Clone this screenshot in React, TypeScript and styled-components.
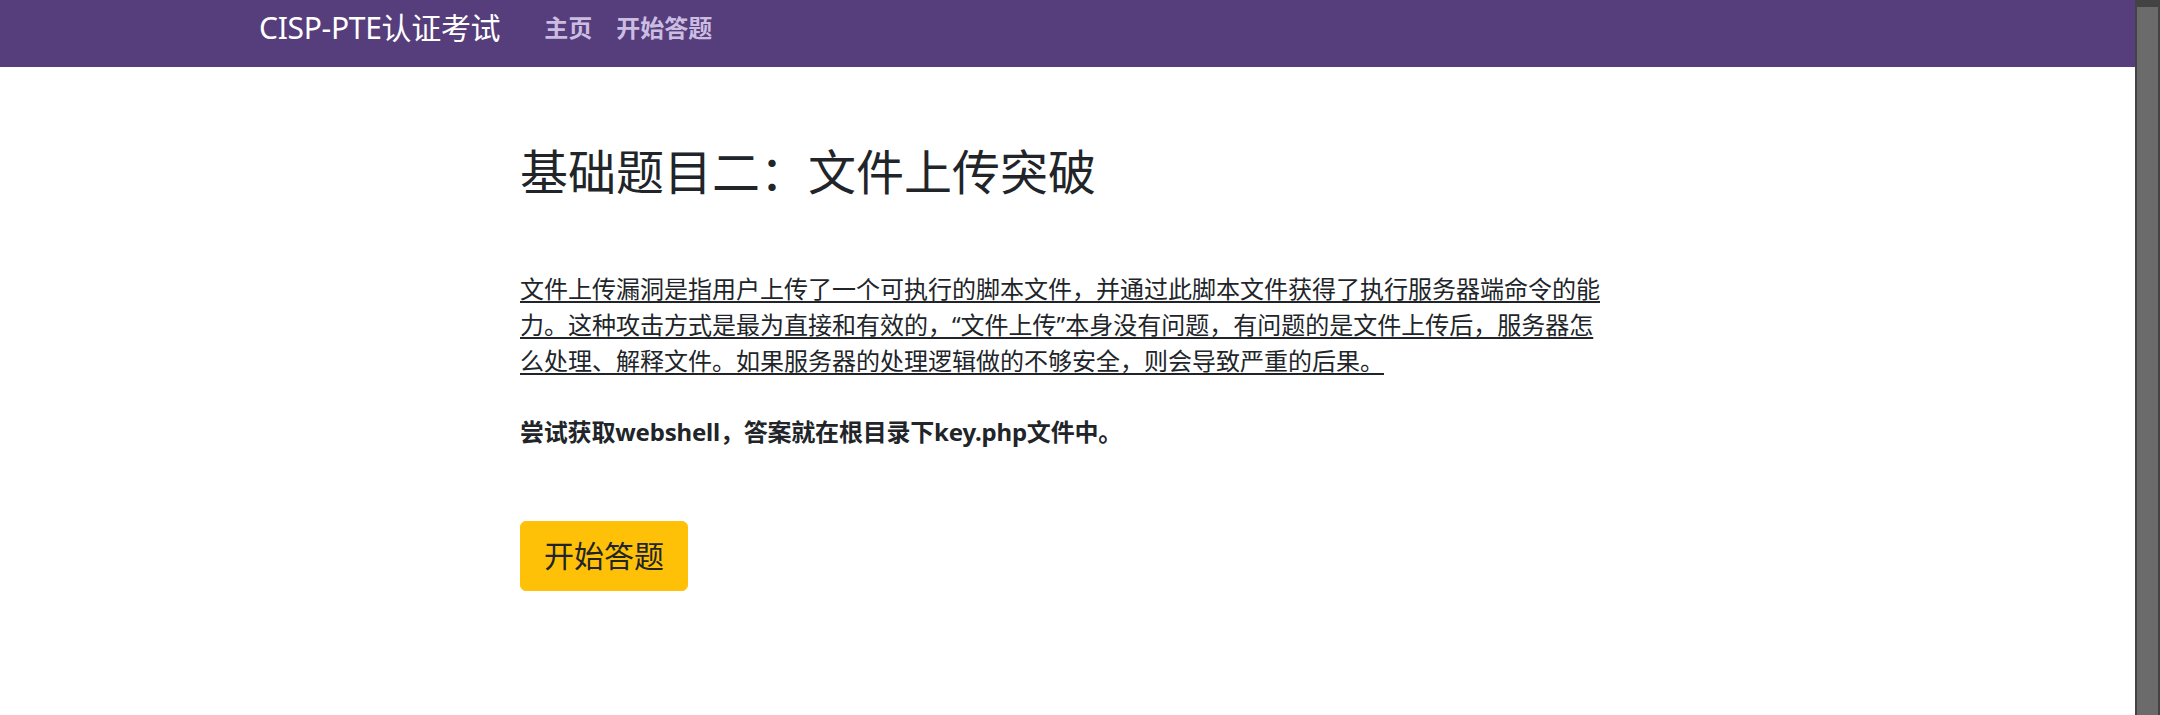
import React from "react";
import styled, { createGlobalStyle } from "styled-components";

const GlobalStyle = createGlobalStyle`
  html, body {
    margin: 0;
    padding: 0;
    background: #ffffff;
    overflow: hidden;
  }
  body {
    font-family: "Noto Sans", "Noto Sans CJK SC", sans-serif;
    color: #212529;
  }
  * { box-sizing: border-box; }
`;

const Frame = styled.div`
  display: flex;
  width: 2160px;
  height: 715px;
  overflow: hidden;
`;

const Page = styled.div`
  flex: 1;
  min-width: 0;
  background: #ffffff;
`;

const ScrollTrack = styled.div`
  width: 25px;
  background: #434343;
  padding: 7px 2px 0 2px;
  display: flex;
`;

const ScrollThumb = styled.div`
  flex: 1;
  background: #6b6b6b;
`;

const NavBar = styled.nav`
  background: #563d7c;
  height: 67px;
`;

const NavInner = styled.div`
  max-width: 1710px;
  margin: 0 auto;
  padding: 5px 22.5px 0 46.5px;
  display: flex;
  align-items: center;
`;

const Brand = styled.a`
  font-size: 30px;
  line-height: 45px;
  color: #ffffff;
  text-decoration: none;
  letter-spacing: -0.3px;
  margin-right: 32px;
`;

const NavLink = styled.a`
  font-size: 24px;
  line-height: 36px;
  font-weight: 700;
  color: #cbbde2;
  text-decoration: none;
  padding: 0 12px;
`;

const Main = styled.main`
  max-width: 1710px;
  margin: 0 auto;
  padding: 76px 22.5px 0;
`;

const Content = styled.div`
  width: 1095px;
  margin-left: 285px;
`;

const Title = styled.h1`
  font-size: 48px;
  font-weight: 400;
  line-height: 1.2;
  margin: 0 0 70px;
  color: #212529;
`;

const Intro = styled.p`
  font-size: 24px;
  line-height: 36px;
  margin: 0 0 35px;
  color: #212529;
  text-decoration: underline;
  text-decoration-thickness: 2px;
  text-underline-offset: 3px;
`;

const Hint = styled.p`
  font-size: 24px;
  line-height: 36px;
  font-weight: 700;
  letter-spacing: -0.2px;
  margin: 0 0 71px;
  color: #212529;
`;

const StartButton = styled.a`
  display: inline-block;
  background: #ffc107;
  border: 1px solid #ffc107;
  color: #212529;
  font-size: 30px;
  line-height: 45px;
  padding: 11.5px 23px;
  border-radius: 6px;
  text-decoration: none;
`;

export default function App() {
  return (
    <>
      <GlobalStyle />
      <Frame>
        <Page>
          <NavBar>
            <NavInner>
              <Brand href="#">CISP-PTE认证考试</Brand>
              <NavLink href="#">主页</NavLink>
              <NavLink href="#">开始答题</NavLink>
            </NavInner>
          </NavBar>
          <Main>
            <Content>
              <Title>基础题目二：文件上传突破</Title>
              <Intro>
                文件上传漏洞是指用户上传了一个可执行的脚本文件，并通过此脚本文件获得了执行服务器端命令的能力。这种攻击方式是最为直接和有效的，“文件上传”本身没有问题，有问题的是文件上传后，服务器怎么处理、解释文件。如果服务器的处理逻辑做的不够安全，则会导致严重的后果。
              </Intro>
              <Hint>尝试获取webshell，答案就在根目录下key.php文件中。</Hint>
              <StartButton href="#">开始答题</StartButton>
            </Content>
          </Main>
        </Page>
        <ScrollTrack>
          <ScrollThumb />
        </ScrollTrack>
      </Frame>
    </>
  );
}
